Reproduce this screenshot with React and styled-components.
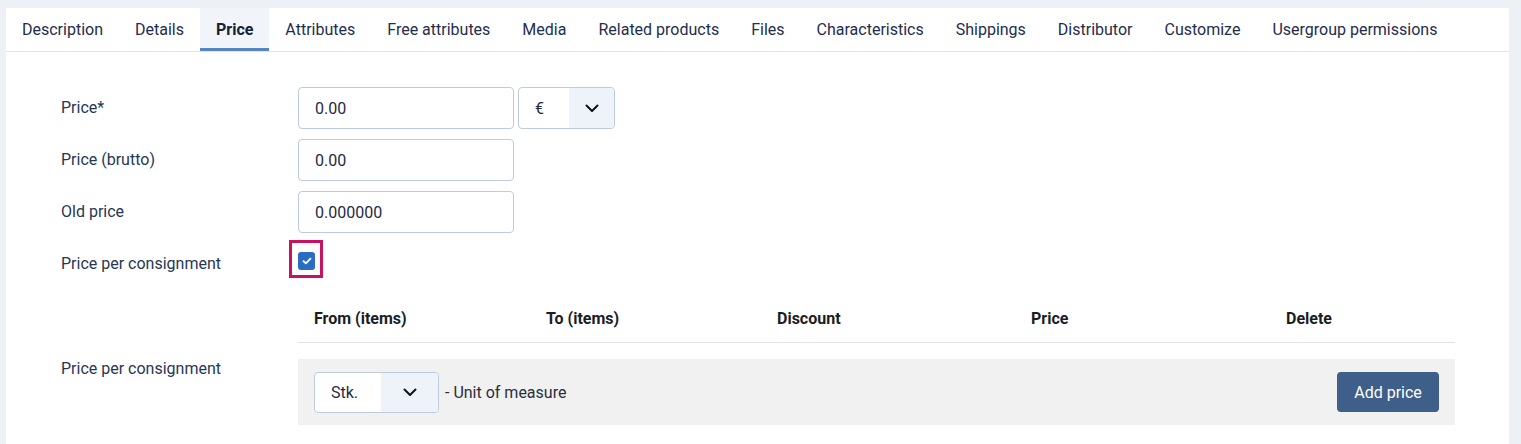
import React from "react";
import styled, { createGlobalStyle } from "styled-components";

const GlobalStyle = createGlobalStyle`
  html, body {
    margin: 0;
    padding: 0;
    background: #edf1f5;
    font-family: Roboto, "Liberation Sans", Arial, sans-serif;
  }
  *, *::before, *::after { box-sizing: border-box; }
`;

const Page = styled.div`
  min-height: 444px;
  padding: 8px 12px 0 6px;
  display: flex;
`;

const Panel = styled.div`
  flex: 1;
  background: #ffffff;
  display: flex;
  flex-direction: column;
  min-height: 436px;
`;

const TabBar = styled.nav`
  display: flex;
  height: 44px;
  border-bottom: 1px solid #e1e5ea;
`;

const Tab = styled.div`
  padding: 3px 16px 0;
  height: 43px;
  display: flex;
  align-items: center;
  font-size: 16px;
  color: ${(p) => (p.$active ? "#16213a" : "#1f2d4d")};
  font-weight: ${(p) => (p.$active ? 700 : 400)};
  background: ${(p) => (p.$active ? "#f1f5f9" : "transparent")};
  border-bottom: 3px solid ${(p) => (p.$active ? "#5585c5" : "transparent")};
  white-space: nowrap;
`;

const Content = styled.div`
  padding: ${(p) => (p.$flush ? "0" : "35px")} 54px 0 55px;
  display: grid;
  grid-template-columns: 237px 1fr;
  row-gap: 10px;
`;

const Label = styled.div`
  font-size: 16px;
  color: #283652;
  line-height: 22px;
  align-self: ${(p) => (p.$top ? "start" : "center")};
  padding-top: ${(p) => (p.$top ? "15px" : "0")};
`;

const Field = styled.div`
  display: flex;
  align-items: center;
  gap: 4px;
  min-height: 42px;
`;

const Input = styled.div`
  width: 216px;
  height: 42px;
  border: 1px solid #bccbe0;
  border-radius: 4px;
  padding: 0 16px;
  display: flex;
  align-items: center;
  font-size: 16px;
  color: #1f2a44;
`;

const SelectBox = styled.div`
  display: flex;
  height: ${(p) => p.$h}px;
  border: 1px solid #bccbe0;
  border-radius: 4px;
  overflow: hidden;
  background: #ffffff;
`;

const SelectValue = styled.div`
  width: ${(p) => p.$w}px;
  padding-left: 16px;
  display: flex;
  align-items: center;
  font-size: 16px;
  color: #1f2a44;
`;

const SelectArrow = styled.div`
  width: ${(p) => p.$w}px;
  background: #eef3fa;
  display: flex;
  align-items: center;
  justify-content: center;
  color: #111;
`;

const CheckCell = styled.div`
  align-self: start;
  padding-top: 9px;
  height: 42px;
`;

const Highlight = styled.div`
  position: relative;
  width: 17px;
  height: 18px;
  &::after {
    content: "";
    position: absolute;
    left: -9px;
    top: -12px;
    width: 34px;
    height: 38px;
    border: 3px solid #c8115f;
  }
`;

const CheckBox = styled.div`
  width: 17px;
  height: 18px;
  border-radius: 3px;
  background: #2b6cc4;
  display: flex;
  align-items: center;
  justify-content: center;
`;

const TableHead = styled.div`
  display: grid;
  grid-template-columns: 232px 231px 254px 255px 1fr;
  border-bottom: 1px solid #dfe2e6;
`;

const HeadCell = styled.div`
  padding: 13px 16px 12px;
  line-height: 22px;
  font-size: 16px;
  font-weight: 700;
  color: #1a1d24;
`;

const FooterCell = styled.div`
  padding-top: 16px;
`;

const Footer = styled.div`
  background: #f1f1f1;
  height: 66px;
  padding: 0 16px 0 16px;
  display: flex;
  align-items: center;
  gap: 6px;
`;

const UnitText = styled.span`
  font-size: 16px;
  color: #2a2f3a;
  flex: 1;
`;

const Button = styled.button`
  height: 40px;
  width: 102px;
  border: none;
  border-radius: 4px;
  background: #3e5f8a;
  color: #ffffff;
  font-family: inherit;
  font-size: 16px;
  cursor: pointer;
`;

const Chevron = () => (
  <svg width="14" height="9" viewBox="0 0 14 9" fill="none">
    <path d="M1.5 1.5 L7 7 L12.5 1.5" stroke="#111" strokeWidth="2" strokeLinecap="round" strokeLinejoin="round" />
  </svg>
);

const tabs = [
  "Description",
  "Details",
  "Price",
  "Attributes",
  "Free attributes",
  "Media",
  "Related products",
  "Files",
  "Characteristics",
  "Shippings",
  "Distributor",
  "Customize",
  "Usergroup permissions",
];

const headers = ["From (items)", "To (items)", "Discount", "Price", "Delete"];

export default function App() {
  return (
    <>
      <GlobalStyle />
      <Page>
        <Panel>
          <TabBar>
            {tabs.map((t) => (
              <Tab key={t} $active={t === "Price"}>
                {t}
              </Tab>
            ))}
          </TabBar>
          <Content>
            <Label>Price*</Label>
            <Field>
              <Input>0.00</Input>
              <SelectBox $h={42}>
                <SelectValue $w={50}>€</SelectValue>
                <SelectArrow $w={45}>
                  <Chevron />
                </SelectArrow>
              </SelectBox>
            </Field>

            <Label>Price (brutto)</Label>
            <Field>
              <Input>0.00</Input>
            </Field>

            <Label>Old price</Label>
            <Field>
              <Input>0.000000</Input>
            </Field>

            <Label>Price per consignment</Label>
            <CheckCell>
              <Highlight>
                <CheckBox>
                  <svg width="10" height="8" viewBox="0 0 10 8" fill="none">
                    <path d="M1.5 4.2 L3.9 6.3 L8.5 1.6" stroke="#fff" strokeWidth="1.8" strokeLinecap="round" strokeLinejoin="round" />
                  </svg>
                </CheckBox>
              </Highlight>
            </CheckCell>

            <div />
            <TableHead>
              {headers.map((h) => (
                <HeadCell key={h}>{h}</HeadCell>
              ))}
            </TableHead>
          </Content>
          <Content $flush>
            <Label $top>Price per consignment</Label>
            <FooterCell>
              <Footer>
                <SelectBox $h={41}>
                  <SelectValue $w={66}>Stk.</SelectValue>
                  <SelectArrow $w={57}>
                    <Chevron />
                  </SelectArrow>
                </SelectBox>
                <UnitText>- Unit of measure</UnitText>
                <Button>Add price</Button>
              </Footer>
            </FooterCell>
          </Content>
        </Panel>
      </Page>
    </>
  );
}
